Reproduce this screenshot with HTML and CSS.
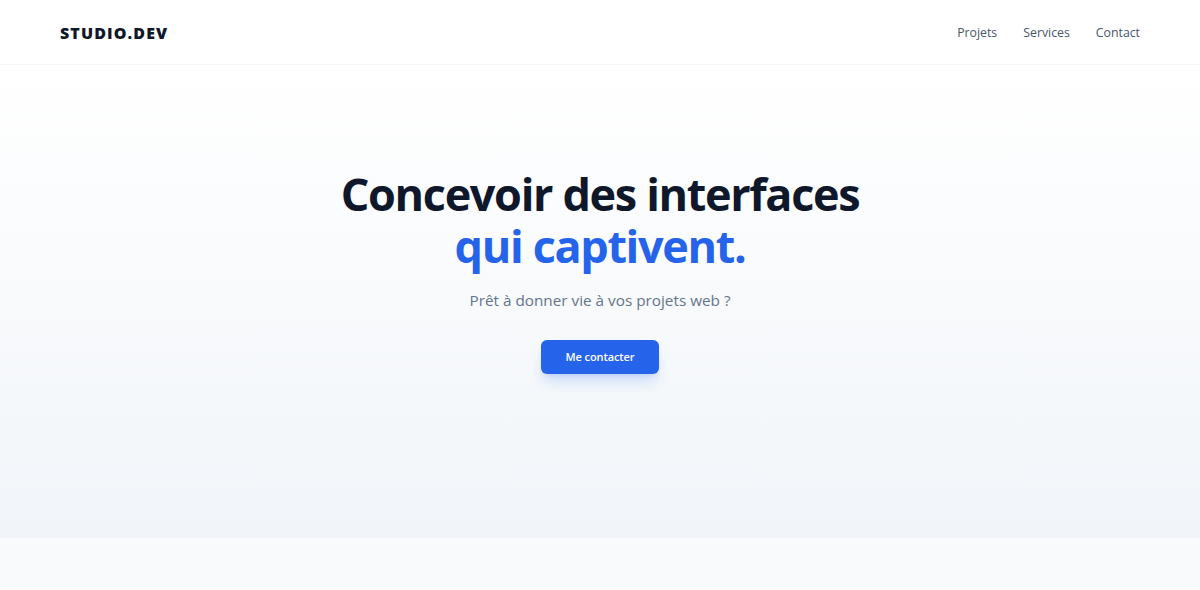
FILE: index.html
```html
<!DOCTYPE html>
<html lang="fr">
<head>
<meta charset="utf-8">
<title>Studio.dev</title>
<link rel="stylesheet" href="styles.css">
</head>
<body>
<header class="site-header">
  <div class="logo">STUDIO.DEV</div>
  <nav class="nav">
    <a href="#">Projets</a>
    <a href="#">Services</a>
    <a href="#">Contact</a>
  </nav>
</header>
<main>
  <section class="hero">
    <h1 class="hero-title">Concevoir des interfaces<br><span class="accent">qui captivent.</span></h1>
    <p class="hero-sub">Prêt à donner vie à vos projets web ?</p>
    <a class="btn" href="#">Me contacter</a>
  </section>
  <section class="after"></section>
</main>
</body>
</html>
```

FILE: styles.css
```css
* { box-sizing: border-box; }
html, body { margin: 0; padding: 0; }
body {
  font-family: "Open Sans", "Noto Sans", sans-serif;
  background: #f8fafc;
  color: #0f172a;
}
.site-header {
  height: 65px;
  display: flex;
  align-items: center;
  justify-content: space-between;
  padding: 1px 60px 0;
  background: #ffffff;
  border-bottom: 1px solid #f1f5f9;
}
.logo {
  font-weight: 800;
  font-size: 16px;
  letter-spacing: 0.07em;
  color: #0f172a;
}
.nav {
  display: flex;
  gap: 26px;
}
.nav a {
  font-size: 12.3px;
  color: #475569;
  text-decoration: none;
}
.hero {
  height: 473px;
  background: linear-gradient(180deg, #ffffff 0%, #f1f5f9 100%);
  display: flex;
  flex-direction: column;
  align-items: center;
  padding-top: 103px;
  text-align: center;
}
.hero-title {
  margin: 0;
  font-size: 45px;
  line-height: 52px;
  font-weight: 700;
  letter-spacing: -0.03em;
  color: #0f172a;
}
.accent { color: #2563eb; }
.hero-sub {
  margin: 16px 0 0;
  font-size: 15.3px;
  line-height: 24px;
  color: #64748b;
}
.btn {
  margin-top: 28px;
  display: inline-block;
  padding: 10px 25px;
  background: #2563eb;
  color: #ffffff;
  font-size: 11px;
  font-weight: 600;
  letter-spacing: -0.01em;
  line-height: 14px;
  border-radius: 6px;
  text-decoration: none;
  box-shadow: 0 10px 15px -3px rgba(37, 99, 235, 0.2), 0 4px 6px -4px rgba(37, 99, 235, 0.2);
}
.after {
  height: 60px;
  background: #f8fafc;
}
```
